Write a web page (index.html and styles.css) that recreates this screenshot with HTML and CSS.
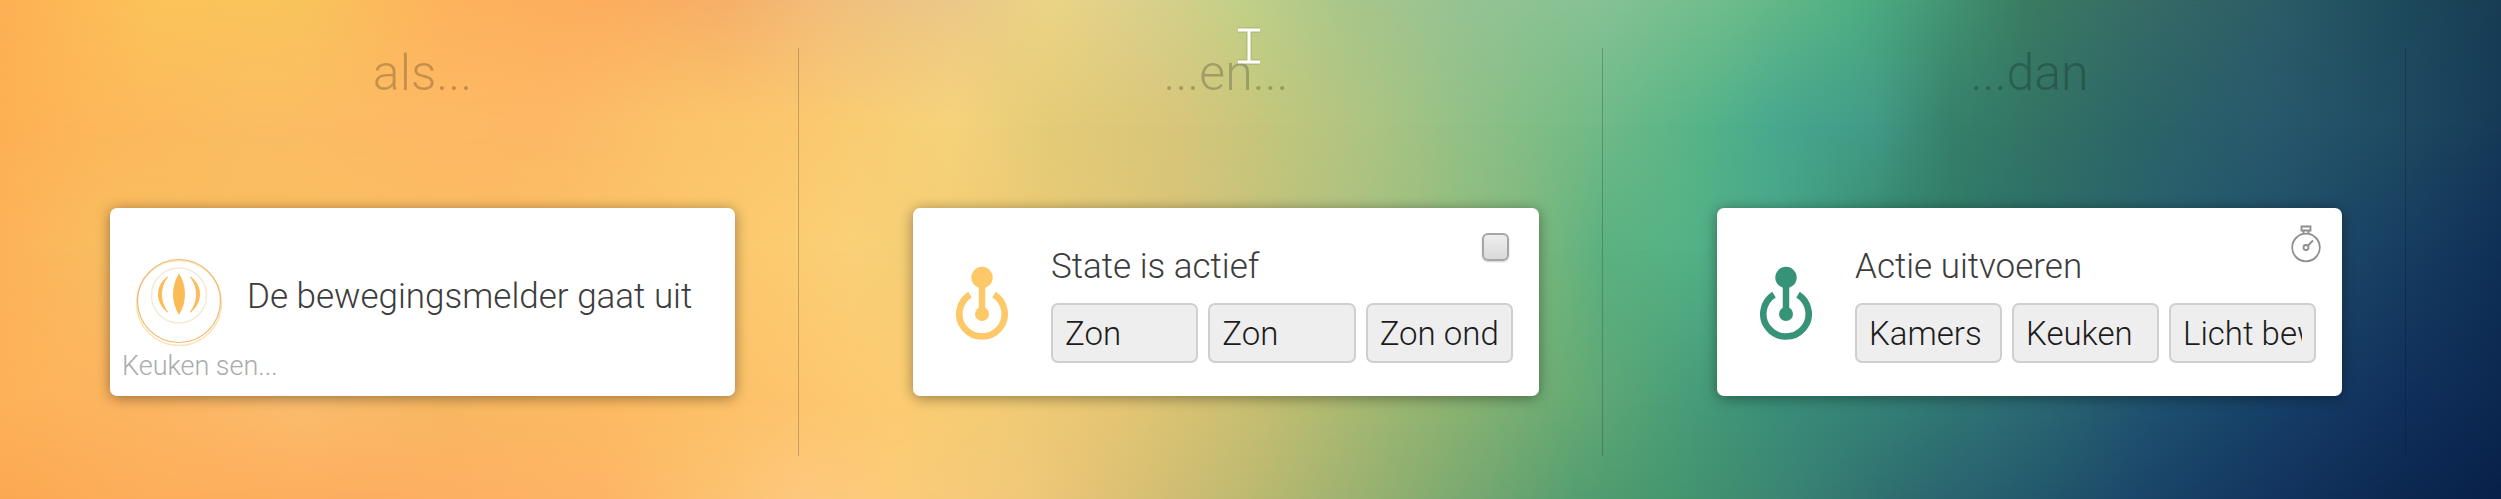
FILE: index.html
```html
<!DOCTYPE html>
<html lang="nl">
<head>
<meta charset="utf-8">
<title>Flow</title>
<link rel="stylesheet" href="styles.css">
</head>
<body>
<div class="backdrop" aria-hidden="true">
  <div class="band band-1"></div>
  <div class="band band-2"></div>
  <div class="band band-3"></div>
  <div class="band band-4"></div>
  <div class="band band-5"></div>
</div>
<main class="flow">
  <section class="column column-first">
    <h2 class="heading">als...</h2>
    <article class="card card-device">
      <div class="device-row">
        <svg class="sensor" viewBox="0 0 88 88" aria-hidden="true">
          <circle cx="44" cy="45" r="42.5" fill="none" stroke="#fde3b4" stroke-width="1.5"/>
          <circle cx="44" cy="43" r="41.5" fill="none" stroke="#edb97a" stroke-width="1.2"/>
          <circle cx="44" cy="37.500" r="27.500" fill="none" stroke="#f6ead6" stroke-width="1.5"/>
          <path d="M44 15.500C52 28 52 44 44 57C36 44 36 28 44 15.500Z" fill="#fdbb58"/>
          <path d="M32.500 19C21 27 20 44 32.500 54C25 44 24 30 32.500 19Z" fill="#fdbb58" stroke="#fdbb58" stroke-width="1"/>
          <path d="M55.500 19C67 27 68 44 55.500 54C63 44 64 30 55.500 19Z" fill="#fdbb58" stroke="#fdbb58" stroke-width="1"/>
        </svg>
        <h3 class="title title-device">De bewegingsmelder gaat uit</h3>
      </div>
      <p class="caption">Keuken sen...</p>
    </article>
  </section>
  <section class="column">
    <h2 class="heading">...en...</h2>
    <article class="card card-logic">
      <svg class="switch switch-yellow" viewBox="0 0 52 76" aria-hidden="true">
        <path d="M14 28.600A22.700 22.700 0 1 0 38 28.600" fill="none" stroke="currentColor" stroke-width="6.600"/>
        <path d="M26 12V48" stroke="currentColor" stroke-width="6.500"/>
        <circle cx="26" cy="11.500" r="10.700" fill="currentColor"/>
        <circle cx="26" cy="48" r="7" fill="currentColor"/>
      </svg>
      <div class="content">
        <h3 class="title">State is actief</h3>
        <div class="fields">
          <input class="field" type="text" value="Zon" aria-label="Map">
          <input class="field" type="text" value="Zon" aria-label="Groep">
          <input class="field" type="text" value="Zon onder" aria-label="State">
        </div>
      </div>
      <input class="tick" type="checkbox" aria-label="Omkeren">
    </article>
  </section>
  <section class="column">
    <h2 class="heading">...dan</h2>
    <article class="card card-logic">
      <svg class="switch switch-green" viewBox="0 0 52 76" aria-hidden="true">
        <path d="M14 28.600A22.700 22.700 0 1 0 38 28.600" fill="none" stroke="currentColor" stroke-width="6.600"/>
        <path d="M26 12V48" stroke="currentColor" stroke-width="6.500"/>
        <circle cx="26" cy="11.500" r="10.700" fill="currentColor"/>
        <circle cx="26" cy="48" r="7" fill="currentColor"/>
      </svg>
      <div class="content">
        <h3 class="title">Actie uitvoeren</h3>
        <div class="fields">
          <input class="field" type="text" value="Kamers" aria-label="Zone">
          <input class="field" type="text" value="Keuken" aria-label="Kamer">
          <input class="field" type="text" value="Licht beweging" aria-label="Actie">
        </div>
      </div>
      <button class="timer" type="button" aria-label="Vertraging">
        <svg class="timer-icon" viewBox="0 0 30 38" fill="none" stroke="#8e8e8e" stroke-width="1.800" aria-hidden="true">
          <circle cx="15" cy="22.500" r="13.800"/>
          <path d="M10.500 1.500H19.500V5.500H10.500ZM12.500 5.500V9M17.500 5.500V9M17 20.500L22 15.500"/>
          <circle cx="15" cy="22.500" r="2.500"/>
        </svg>
      </button>
    </article>
  </section>
</main>
<svg class="pointer" viewBox="0 0 26 38" aria-hidden="true">
  <path d="M2 3H24M2 35H24M13 3V35" fill="none" stroke="#8f9a62" stroke-opacity=".3" stroke-width="6"/>
  <path d="M2 3H24M2 35H24M13 3V35" fill="none" stroke="#fff" stroke-width="3"/>
</svg>
</body>
</html>
```
FILE: styles.css
```css
* { box-sizing: border-box; }

body {
  margin: 0;
  min-height: 100vh;
  position: relative;
  overflow: hidden;
  font-family: Roboto, "Open Sans", sans-serif;
  font-weight: 300;
  color: #3c3c3c;
}

/* Backdrop: horizontal colour ramps that fade into each other downwards */
.backdrop, .band { position: absolute; inset: 0; }
.backdrop { z-index: -1; }
.band-1 {
  background: linear-gradient(90deg, #fdb054 0%, #fcc35a 6%, #f9c45c 12%, #fdb25c 18%, #fcae5e 24%, #f6b068 29%, #f2be7c 33%, #ebc888 38%, #ecd486 42%, #d9d08c 46%, #c0d088 50%, #a9c68a 54%, #94c394 59%, #86c294 64%, #6fbd8b 69%, #50b083 74%, #459b78 77%, #3a7c62 81%, #366a66 86%, #2c5c66 91%, #1e4a5c 96%, #173d54 100%);
}
.band-2 {
  background: linear-gradient(90deg, #fdb053 0%, #fcb85a 4%, #fbbd62 10%, #fdba64 16%, #fdb866 22%, #fbc36a 27%, #fbc86e 32%, #f6d37a 38%, #e4cb78 42%, #d8c67a 47%, #c2c67c 51%, #acc483 55%, #8fc086 59%, #70ba87 64%, #56b488 68%, #48a88e 71%, #429a86 75%, #36806a 78%, #327164 82%, #2b6468 86%, #28586c 91%, #1f4a62 96%, #153a58 100%);
  mask-image: linear-gradient(transparent 0%, #000 25%);
}
.band-3 {
  background: linear-gradient(90deg, #fdb259 0%, #f9bd60 4%, #fbbd62 20%, #fccb70 31%, #fad078 34%, #efcb72 40%, #d8c478 47%, #a8c080 55%, #80b97c 61%, #5cb180 64%, #56b285 67%, #48a888 71%, #338368 76%, #2c6e68 81%, #275d6e 87%, #1b4566 94%, #0f3056 100%);
  mask-image: linear-gradient(transparent 25%, #000 50%);
}
.band-4 {
  background: linear-gradient(90deg, #fdb258 0%, #fcb662 6%, #fbbd6e 12%, #f8b862 18%, #fdbc62 25%, #fdc36c 31%, #fccc72 36%, #f3cc74 40%, #e4c674 45%, #c9bf72 50%, #a2b872 55%, #85b272 59%, #66aa74 63%, #4a9e78 67%, #3a8f78 71%, #347e76 76%, #2a6672 82%, #1f5270 86%, #174068 91%, #10305c 96%, #0c2850 100%);
  mask-image: linear-gradient(transparent 50%, #000 80%);
}
.band-5 {
  background: linear-gradient(90deg, #fca852 0%, #fdae5a 6%, #fcae60 15%, #fdb466 24%, #fcc06e 28%, #fdc87c 32%, #fbcb78 36%, #f0c878 41%, #dcc074 45%, #bcb970 50%, #96b070 55%, #76a870 59%, #559e70 63%, #44966e 67%, #3c8672 71%, #2e6c70 76%, #22566c 82%, #1a4468 86%, #12345e 91%, #0c2850 96%, #08204a 100%);
  mask-image: linear-gradient(transparent 80%, #000 100%);
}

.flow {
  display: grid;
  grid-template-columns: minmax(0, 799fr) minmax(0, 804fr) minmax(0, 803fr);
  padding: 48px 95px 43px 0;
}
.column {
  height: 408px;
  padding: 0 63px 0 114px;
  border-right: 1px solid rgba(0, 0, 0, .2);
}
.column-first { padding-left: 110px; }

.heading {
  margin: 0 0 110px;
  font-size: 50px;
  line-height: 50px;
  font-weight: 300;
  text-align: center;
  color: rgba(0, 0, 0, .22);
}

.card {
  position: relative;
  min-height: 188px;
  background: #fff;
  border-radius: 7px;
  box-shadow: 0 2px 14px rgba(0, 0, 0, .4);
}
.card-device { padding: 50px 12px 10px; }
.device-row {
  display: flex;
  align-items: center;
  gap: 24px;
  padding-left: 13px;
}
.sensor { width: 88px; height: 88px; flex: none; }

.title {
  margin: 0;
  font-size: 35px;
  line-height: 44px;
  font-weight: 300;
  white-space: nowrap;
}
.title-device { padding-bottom: 10px; }
.caption {
  margin: 0;
  font-size: 27px;
  line-height: 40px;
  color: #ababab;
}

.card-logic {
  display: flex;
  align-items: center;
  gap: 43px;
  padding: 37px 26px 33px 43px;
}
.switch { width: 52px; height: 76px; flex: none; }
.switch-yellow { color: #fdc868; }
.switch-green { color: #379377; }

.content { flex: 1; min-width: 0; }
.fields { display: flex; gap: 10px; margin-top: 14px; }
.field {
  flex: 1;
  min-width: 0;
  height: 60px;
  padding: 0 12px;
  border: 2px solid #cfcfcf;
  border-radius: 7px;
  background: #eee;
  font: inherit;
  font-size: 33px;
  color: #1c1c1c;
}

.tick {
  appearance: none;
  position: absolute;
  top: 25px;
  right: 30px;
  width: 27px;
  height: 28px;
  margin: 0;
  border: 2px solid #a6a6a6;
  border-radius: 6px;
  background: linear-gradient(#eee, #d9d9d9);
  box-shadow: 0 1px 2px rgba(0, 0, 0, .2);
}

.timer {
  position: absolute;
  top: 17px;
  right: 21px;
  padding: 0;
  border: 0;
  background: none;
}
.timer-icon { display: block; width: 30px; height: 38px; }

.pointer {
  position: absolute;
  left: 1236px;
  top: 27px;
  width: 26px;
  height: 38px;
}
```
